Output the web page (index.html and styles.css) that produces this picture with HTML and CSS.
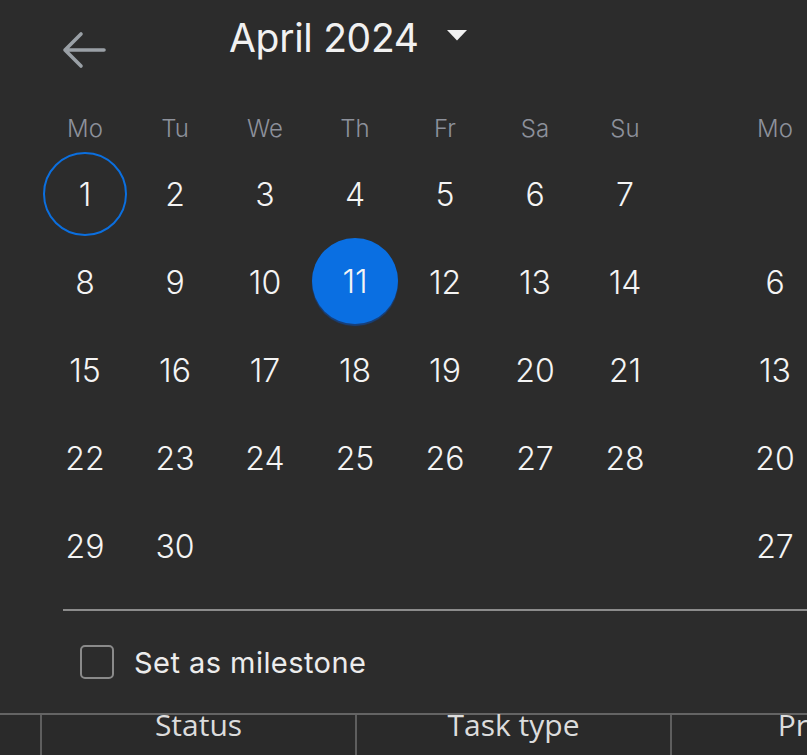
FILE: index.html
```html
<!DOCTYPE html>
<html lang="en">
<head>
<meta charset="utf-8">
<title>Date picker</title>
<link rel="stylesheet" href="styles.css">
</head>
<body>
<div class="viewport">
  <section class="picker">
    <header class="head">
      <button class="back" aria-label="Previous month">
        <svg width="44" height="38" viewBox="0 0 44 38"><path d="M42 19H3M19 3 3 19l16 16" fill="none" stroke="#9aa0a6" stroke-width="3.6" stroke-linecap="round" stroke-linejoin="round"/></svg>
      </button>
      <div class="title">April 2024
        <svg class="caret" width="20" height="11" viewBox="0 0 20 11"><path d="M0 0h20L10 10.5z" fill="#f1f1f1"/></svg>
      </div>
    </header>
    <div class="months">
      <div class="month">
        <div class="wd">Mo</div><div class="wd">Tu</div><div class="wd">We</div><div class="wd">Th</div><div class="wd">Fr</div><div class="wd">Sa</div><div class="wd">Su</div>
        <div class="day"><span class="num today">1</span></div><div class="day"><span class="num">2</span></div><div class="day"><span class="num">3</span></div><div class="day"><span class="num">4</span></div><div class="day"><span class="num">5</span></div><div class="day"><span class="num">6</span></div><div class="day"><span class="num">7</span></div>
        <div class="day"><span class="num">8</span></div><div class="day"><span class="num">9</span></div><div class="day"><span class="num">10</span></div><div class="day"><span class="num selected">11</span></div><div class="day"><span class="num">12</span></div><div class="day"><span class="num">13</span></div><div class="day"><span class="num">14</span></div>
        <div class="day"><span class="num">15</span></div><div class="day"><span class="num">16</span></div><div class="day"><span class="num">17</span></div><div class="day"><span class="num">18</span></div><div class="day"><span class="num">19</span></div><div class="day"><span class="num">20</span></div><div class="day"><span class="num">21</span></div>
        <div class="day"><span class="num">22</span></div><div class="day"><span class="num">23</span></div><div class="day"><span class="num">24</span></div><div class="day"><span class="num">25</span></div><div class="day"><span class="num">26</span></div><div class="day"><span class="num">27</span></div><div class="day"><span class="num">28</span></div>
        <div class="day"><span class="num">29</span></div><div class="day"><span class="num">30</span></div><div class="day"></div><div class="day"></div><div class="day"></div><div class="day"></div><div class="day"></div>
      </div>
      <div class="month next">
        <div class="wd">Mo</div>
        <div class="day"></div>
        <div class="day"><span class="num">6</span></div>
        <div class="day"><span class="num">13</span></div>
        <div class="day"><span class="num">20</span></div>
        <div class="day"><span class="num">27</span></div>
      </div>
    </div>
    <div class="divider"></div>
    <label class="milestone"><span class="box"></span>Set as milestone</label>
  </section>
  <div class="table-head">
    <div class="th first"></div>
    <div class="th">Status</div>
    <div class="th">Task type</div>
    <div class="th">Priority</div>
  </div>
</div>
</body>
</html>
```

FILE: styles.css
```css
html, body {
  margin: 0;
  padding: 0;
  background: #2c2c2c;
}
.viewport {
  width: 807px;
  height: 755px;
  overflow: hidden;
  font-family: Inter, "Noto Sans", sans-serif;
  color: #f1f1f1;
}
.picker {
  width: 1200px;
  height: 713px;
  background: #2c2c2c;
}
.head {
  height: 106px;
  display: flex;
  align-items: flex-start;
  padding-left: 62px;
}
.back {
  margin: 31px 0 0;
  padding: 0;
  border: 0;
  background: none;
  width: 44px;
  height: 38px;
  display: block;
}
.back svg { display: block; }
.title {
  margin: 14px 0 0 123px;
  font-size: 39px;
  line-height: 48px;
  font-weight: 400;
  letter-spacing: -0.3px;
  color: #f1f1f1;
  display: flex;
  align-items: center;
}
.caret {
  margin: 0 0 6px 28px;
  display: block;
}
.months {
  display: flex;
  gap: 60px;
  padding-left: 40px;
}
.month {
  display: grid;
  grid-template-columns: repeat(7, 90px);
  grid-auto-rows: 88px;
  grid-template-rows: 44px;
}
.month.next {
  grid-template-columns: 90px;
}
.wd {
  display: flex;
  align-items: center;
  justify-content: center;
  font-size: 24px;
  color: #8d919b;
  font-weight: 300;
}
.day {
  display: flex;
  align-items: center;
  justify-content: center;
}
.num {
  width: 84px;
  height: 84px;
  border-radius: 50%;
  display: flex;
  align-items: center;
  justify-content: center;
  font-size: 32px;
  font-weight: 300;
  color: #f4f4f4;
  box-sizing: border-box;
}
.num.today {
  border: 2px solid #0b6fdf;
}
.num.selected {
  width: 86px;
  height: 86px;
  background: #0a6fe2;
  box-shadow: 0 2px 1px #17417e;
  margin-top: -2px;
}
.divider {
  margin: 19px 0 0 63px;
  height: 2px;
  background: #8c8c8c;
}
.milestone {
  height: 102px;
  display: flex;
  align-items: center;
  padding-left: 80px;
  font-size: 29px;
  letter-spacing: 0.45px;
  color: #ececec;
}
.box {
  width: 34px;
  height: 34px;
  box-sizing: border-box;
  border: 2px solid #8a8a8a;
  border-radius: 5px;
  margin-right: 20px;
}
.table-head {
  display: flex;
  border-top: 2px solid #646464;
  height: 40px;
  background: #2a2a2a;
  width: 1100px;
}
.th {
  width: 313px;
  border-left: 2px solid #5e5e5e;
  text-align: center;
  font-family: "Open Sans", sans-serif;
  font-size: 30px;
  line-height: 20px;
  color: #dcdcdc;
}
.th.first {
  width: 40px;
  border-left: 0;
}
```
